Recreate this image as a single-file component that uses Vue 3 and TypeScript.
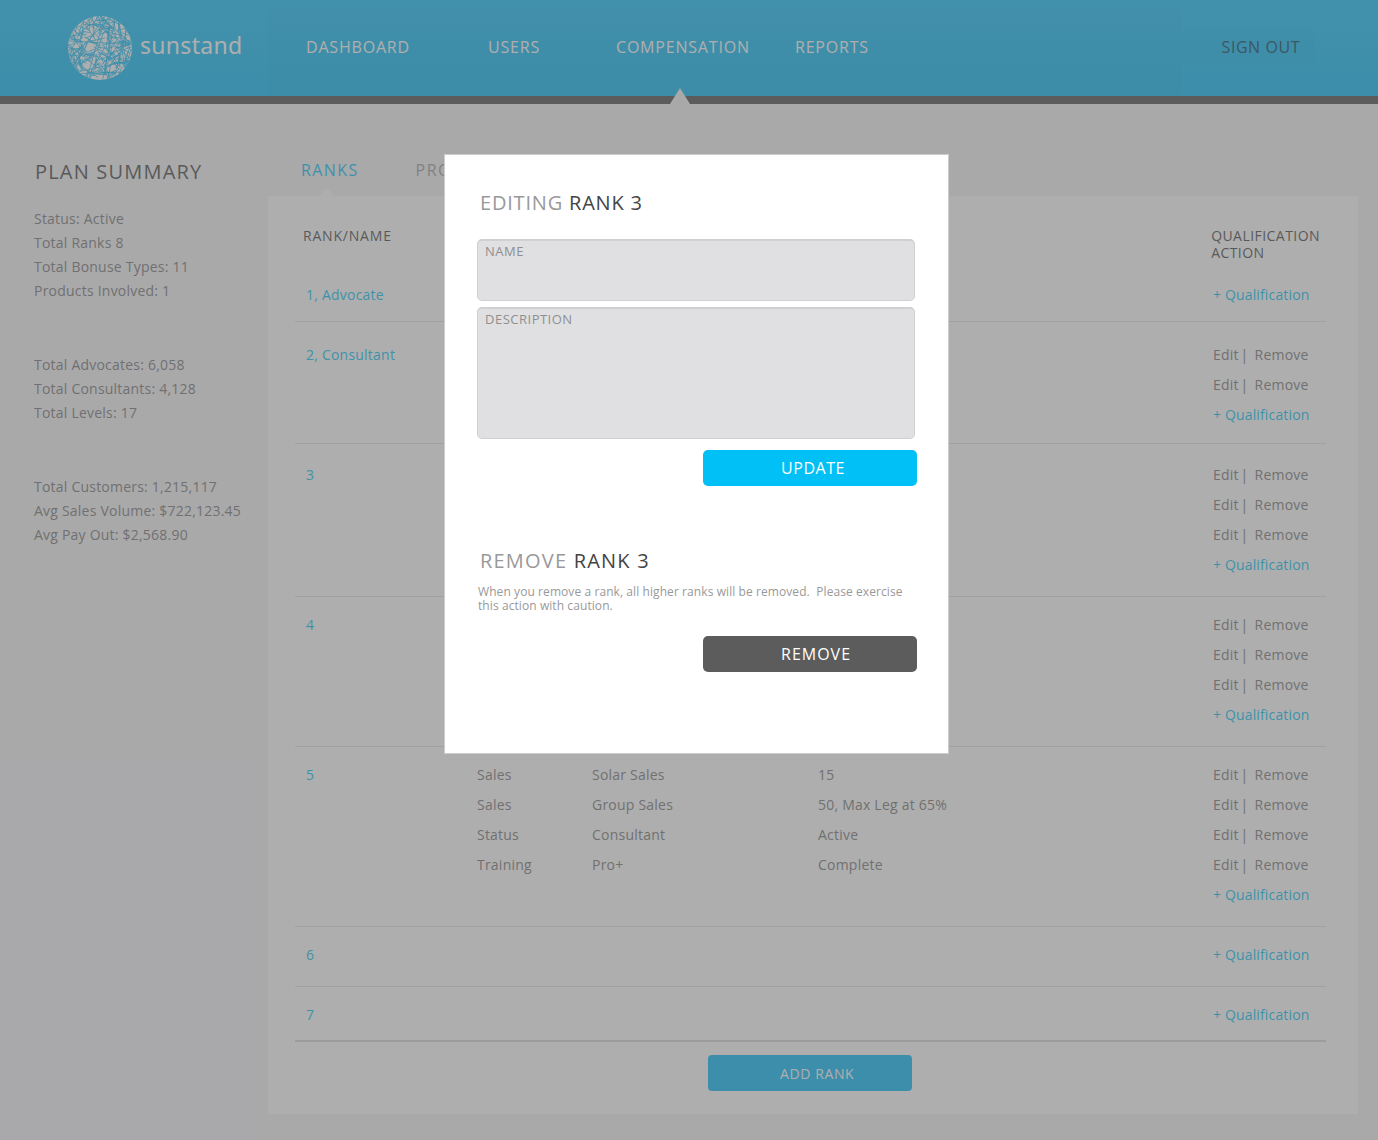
<script setup lang="ts">
interface Qual {
  type: string
  name: string
  value: string
}

interface Rank {
  label: string
  quals: Qual[]
  top: number
  bottom: number
}

const blank: Qual = { type: '', name: '', value: '' }

const summary = [
  ['Status: Active', 'Total Ranks 8', 'Total Bonuse Types: 11', 'Products Involved: 1'],
  ['Total Advocates: 6,058', 'Total Consultants: 4,128', 'Total Levels: 17'],
  ['Total Customers: 1,215,117', 'Avg Sales Volume: $722,123.45', 'Avg Pay Out: $2,568.90'],
]

const ranks: Rank[] = [
  { label: '1, Advocate', quals: [], top: 10, bottom: 11 },
  { label: '2, Consultant', quals: [blank, blank], top: 18, bottom: 13 },
  { label: '3', quals: [blank, blank, blank], top: 16, bottom: 16 },
  { label: '4', quals: [blank, blank, blank], top: 13, bottom: 16 },
  {
    label: '5',
    quals: [
      { type: 'Sales', name: 'Solar Sales', value: '15' },
      { type: 'Sales', name: 'Group Sales', value: '50, Max Leg at 65%' },
      { type: 'Status', name: 'Consultant', value: 'Active' },
      { type: 'Training', name: 'Pro+', value: 'Complete' },
    ],
    top: 13,
    bottom: 16,
  },
  { label: '6', quals: [], top: 13, bottom: 16 },
  { label: '7', quals: [], top: 13, bottom: 10 },
]

// logo: short random cracks plus a few long chords, clipped to the disc
let seed = 17
function rnd() {
  seed = (seed * 16807) % 2147483647
  return seed / 2147483647
}
const cracks = Array.from({ length: 230 }, () => {
  const ang = rnd() * Math.PI * 2
  const dist = Math.sqrt(rnd()) * 33
  const cx = 32 + dist * Math.cos(ang)
  const cy = 32 + dist * Math.sin(ang)
  const dir = rnd() * Math.PI * 2
  const len = 3 + rnd() * 7
  return {
    x1: cx - len * Math.cos(dir),
    y1: cy - len * Math.sin(dir),
    x2: cx + len * Math.cos(dir),
    y2: cy + len * Math.sin(dir),
  }
})
const chords = Array.from({ length: 12 }, () => {
  const a = rnd() * Math.PI * 2
  const b = a + 1 + rnd() * 2
  return {
    x1: 32 + 32 * Math.cos(a),
    y1: 32 + 32 * Math.sin(a),
    x2: 32 + 32 * Math.cos(b),
    y2: 32 + 32 * Math.sin(b),
  }
})
const lines = [...cracks, ...chords]
</script>

<template>
  <div class="page">
    <header class="top">
      <div class="brand">
        <svg class="globe" width="64" height="64" viewBox="0 0 64 64">
          <clipPath id="disc"><circle cx="32" cy="32" r="32" /></clipPath>
          <g clip-path="url(#disc)">
            <rect width="64" height="64" fill="#fff" />
            <line
              v-for="(c, i) in lines"
              :key="i"
              :x1="c.x1"
              :y1="c.y1"
              :x2="c.x2"
              :y2="c.y2"
              stroke="#00b8f7"
              stroke-width="0.75"
            />
          </g>
        </svg>
        <span class="word">sunstand</span>
      </div>
      <nav class="nav">
        <a>DASHBOARD</a>
        <a>USERS</a>
        <a>COMPENSATION</a>
        <a>REPORTS</a>
      </nav>
      <a class="signout">SIGN OUT</a>
      <span class="notch"></span>
    </header>

    <main class="main">
      <aside class="side">
        <h2>PLAN SUMMARY</h2>
        <ul v-for="(group, i) in summary" :key="i">
          <li v-for="line in group" :key="line">{{ line }}</li>
        </ul>
      </aside>

      <section class="content">
        <div class="tabs">
          <a class="active">RANKS</a>
          <a>PROGRAMS</a>
        </div>
        <div class="panel">
          <div class="thead">
            <span class="thead-name">RANK/NAME</span>
            <span>QUALIFICATION<br />ACTION</span>
          </div>
          <div
            v-for="rank in ranks"
            :key="rank.label"
            class="rank"
            :style="{ paddingTop: rank.top + 'px', paddingBottom: rank.bottom + 'px' }"
          >
            <a class="rank-name">{{ rank.label }}</a>
            <template v-for="(q, i) in rank.quals" :key="i">
              <span class="c-type">{{ q.type }}</span>
              <span>{{ q.name }}</span>
              <span>{{ q.value }}</span>
              <span class="c-action"><span class="edit">Edit |</span>Remove</span>
            </template>
            <a class="c-action add">+ Qualification</a>
          </div>
          <div class="foot">
            <button class="add-rank">ADD RANK</button>
          </div>
        </div>
      </section>
    </main>

    <div class="overlay"></div>

    <div class="modal">
      <h3><span>EDITING</span> RANK 3</h3>
      <div class="field name">NAME</div>
      <div class="field desc">DESCRIPTION</div>
      <div class="actions">
        <button class="btn update">UPDATE</button>
      </div>
      <h3 class="remove-title"><span>REMOVE</span> RANK 3</h3>
      <p>When you remove a rank, all higher ranks will be removed.&nbsp; Please exercise this action with caution.</p>
      <div class="actions second">
        <button class="btn remove">REMOVE</button>
      </div>
    </div>
  </div>
</template>

<style scoped>
.page {
  position: relative;
  width: 1378px;
  height: 1140px;
  overflow: hidden;
  background: #f3f3f7;
  font-family: "Open Sans", "DejaVu Sans", sans-serif;
  font-size: 14px;
  letter-spacing: 0.22px;
  color: #747474;
}

.top {
  position: relative;
  display: flex;
  align-items: center;
  height: 96px;
  background: linear-gradient(#0cbefb, #00b7f6);
  border-bottom: 8px solid #464646;
}

.brand {
  display: flex;
  align-items: center;
  width: 200px;
  padding-left: 68px;
}

.globe {
  flex: none;
}

.word {
  margin: -6px 0 0 8px;
  font-family: "Noto Sans", sans-serif;
  font-size: 23px;
  letter-spacing: 0.3px;
  color: #fff;
}

.nav {
  display: grid;
  grid-template-columns: 182px 128px 179px 1fr;
  align-items: center;
  align-self: flex-end;
  width: 876px;
  height: 78px;
  padding: 0 0 10px 38px;
  background: rgba(0, 0, 0, 0.018);
  font-size: 16px;
  letter-spacing: 0.8px;
  color: #fff;
}

.signout {
  margin: -2px 63px 0 auto;
  padding: 6px 15px 6px 39px;
  background: rgba(0, 0, 0, 0.018);
  font-size: 16px;
  letter-spacing: 0.55px;
  color: #003a52;
}

.notch {
  position: absolute;
  left: 670px;
  bottom: -8px;
  border-left: 10px solid transparent;
  border-right: 10px solid transparent;
  border-bottom: 16px solid #f3f3f7;
}

.main {
  display: flex;
}

.side {
  width: 268px;
  flex: none;
  padding: 56px 0 0 34px;
  box-sizing: border-box;
}

.side h2 {
  margin: 0 0 23px 1px;
  font-size: 20px;
  line-height: 24px;
  font-weight: 400;
  letter-spacing: 1.2px;
  color: #414141;
}

.side ul {
  list-style: none;
  margin: 0 0 50px;
  padding: 0;
  line-height: 24px;
}

.content {
  flex: 1;
  margin-right: 20px;
}

.tabs {
  position: relative;
  display: flex;
  height: 92px;
  padding: 54px 0 0 33px;
  box-sizing: border-box;
  font-size: 16px;
  letter-spacing: 1.4px;
  line-height: 24px;
  color: #9a9a9a;
}

.tabs a {
  margin-right: 57px;
}

.tabs .active {
  color: #00bff3;
}

.tabs .active::after {
  content: "";
  position: absolute;
  left: 51px;
  bottom: 0;
  border-left: 8px solid transparent;
  border-right: 8px solid transparent;
  border-bottom: 8px solid #fff;
}

.panel {
  height: 918px;
  padding: 31px 32px 0 27px;
  box-sizing: border-box;
  background: #fff;
}

.thead {
  display: flex;
  justify-content: space-between;
  height: 43px;
  padding: 0 6px 0 8px;
  line-height: 17px;
  letter-spacing: 0.45px;
  color: #414141;
}

.thead-name {
  letter-spacing: 0.8px;
}

.rank {
  display: grid;
  grid-template-columns: 171px 115px 226px 395px 1fr;
  padding-left: 11px;
  line-height: 30px;
  border-bottom: 1px solid #e2e2e2;
}

.rank:nth-last-child(2) {
  border-bottom: 2px solid #d6d6d6;
}

.rank-name {
  grid-column: 1;
  color: #00bff3;
}

.c-type {
  grid-column: 2;
}

.c-action {
  grid-column: 5;
  white-space: nowrap;
}

.edit {
  margin-right: 6px;
  word-spacing: -2px;
}

.add {
  letter-spacing: 0.15px;
  color: #00bff3;
}

.foot {
  display: flex;
  padding: 13px 0 0 413px;
}

.add-rank {
  width: 204px;
  height: 36px;
  padding: 0 0 0 72px;
  border: 0;
  border-radius: 4px;
  background: #00b8f7;
  font: inherit;
  letter-spacing: 0.6px;
  text-align: left;
  color: #fff;
}

.overlay {
  position: absolute;
  inset: 0;
  background: rgba(110, 110, 110, 0.555);
}

.modal {
  position: absolute;
  left: 444px;
  top: 154px;
  width: 505px;
  height: 600px;
  padding: 35px 31px 0 32px;
  box-sizing: border-box;
  background: #fff;
  border: 1px solid #ccc;
}

.modal h3 {
  margin: 0 0 23px 3px;
  font-size: 20px;
  line-height: 26px;
  font-weight: 400;
  letter-spacing: 0.8px;
  color: #444;
}

.modal h3 span {
  color: #999;
}

.field {
  width: 438px;
  padding: 2px 7px;
  box-sizing: border-box;
  margin-bottom: 6px;
  background: #e0e0e2;
  border: 1px solid #d0d0d2;
  border-top-width: 2px;
  border-radius: 5px;
  font-size: 13px;
  line-height: 16px;
  letter-spacing: 0.5px;
  color: #8f8f8f;
}

.name {
  height: 62px;
}

.desc {
  height: 132px;
}

.actions {
  display: flex;
  justify-content: flex-end;
  margin-top: 11px;
}

.btn {
  width: 214px;
  height: 36px;
  padding: 0 0 0 78px;
  border: 0;
  border-radius: 5px;
  font: inherit;
  font-size: 16px;
  letter-spacing: 0.55px;
  text-align: left;
  color: #fff;
}

.update {
  background: #00c0f5;
}

.remove {
  background: #5c5c5c;
  letter-spacing: 1px;
}

.modal .remove-title {
  margin: 62px 0 11px 3px;
  letter-spacing: 1.2px;
}

.modal p {
  width: 430px;
  margin: 0 0 0 1px;
  font-size: 12px;
  line-height: 14px;
  letter-spacing: 0.08px;
  color: #999;
}

.second {
  margin-top: 23px;
}
</style>
